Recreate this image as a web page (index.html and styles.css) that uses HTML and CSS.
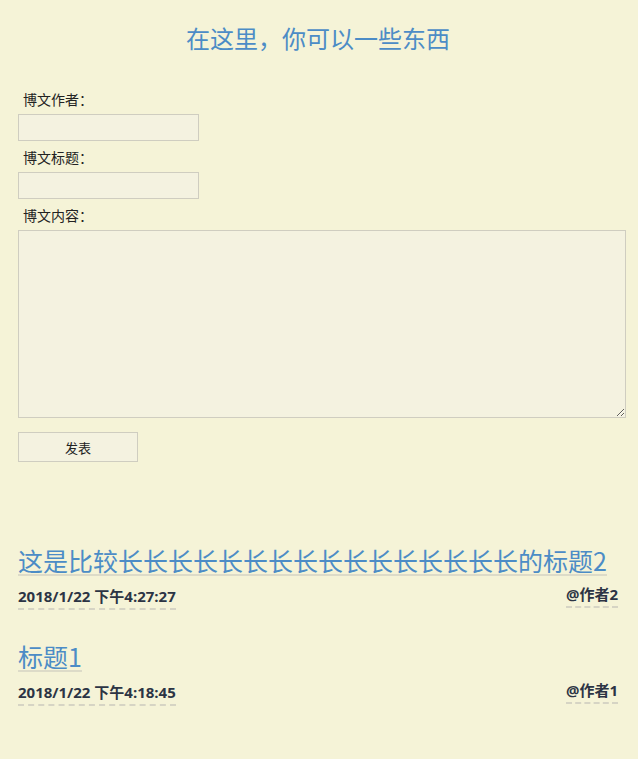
FILE: index.html
```html
<!DOCTYPE html>
<html lang="zh-CN">
<head>
<meta charset="utf-8">
<title>博客</title>
<link rel="stylesheet" href="styles.css">
</head>
<body>
<main class="page">
  <h1 class="heading">在这里，你可以一些东西</h1>
  <form class="editor">
    <label class="field-label">博文作者：</label>
    <input class="field-input" type="text">
    <label class="field-label">博文标题：</label>
    <input class="field-input" type="text">
    <label class="field-label">博文内容：</label>
    <textarea class="field-area"></textarea>
    <button class="submit" type="button">发表</button>
  </form>
  <section class="posts">
    <article class="post">
      <h2 class="post-title">这是比较长长长长长长长长长长长长长长长长的标题2</h2>
      <div class="post-meta">
        <span class="post-date">2018/1/22 下午4:27:27</span>
        <span class="post-author">@作者2</span>
      </div>
    </article>
    <article class="post">
      <h2 class="post-title">标题1</h2>
      <div class="post-meta">
        <span class="post-date">2018/1/22 下午4:18:45</span>
        <span class="post-author">@作者1</span>
      </div>
    </article>
  </section>
</main>
</body>
</html>
```
FILE: styles.css
```css
html, body {
  margin: 0;
  padding: 0;
  background: #f5f3d7;
}
body {
  font-family: "Open Sans", "Noto Sans CJK SC", sans-serif;
  color: #222;
}
.page {
  padding: 0 20px 0 18px;
}
.heading {
  margin: 0;
  padding-top: 23px;
  text-align: center;
  font-family: "Noto Sans CJK SC", sans-serif;
  font-weight: normal;
  font-size: 24px;
  line-height: 30px;
  color: #4c8cc6;
}
.editor {
  display: flex;
  flex-direction: column;
  align-items: flex-start;
  margin-top: 36px;
}
.field-label {
  font-family: "Noto Sans CJK SC", sans-serif;
  font-size: 14px;
  line-height: 20px;
  padding-left: 5px;
  margin: 6px 0 5px;
  color: #222;
}
.field-label:first-child {
  margin-top: 0;
}
.field-input {
  box-sizing: border-box;
  width: 181px;
  height: 27px;
  margin: 0;
  border: 1px solid #cfcdc0;
  background: #f4f2e0;
  outline: none;
}
.field-area {
  box-sizing: border-box;
  width: 608px;
  height: 188px;
  margin: 0;
  border: 1px solid #cfcdc0;
  background: #f4f2e0;
  outline: none;
  display: block;
}
.submit {
  box-sizing: border-box;
  width: 120px;
  height: 30px;
  margin-top: 14px;
  border: 1px solid #cfcdc0;
  background: #f4f2e0;
  font-family: "Noto Sans CJK SC", sans-serif;
  font-size: 13px;
  color: #222;
  padding: 0;
}
.posts {
  margin-top: 84px;
  display: flex;
  flex-direction: column;
  gap: 32px;
}
.post-title {
  display: inline-block;
  margin: 0;
  font-family: "Noto Sans CJK SC", sans-serif;
  font-weight: normal;
  font-size: 25px;
  line-height: 28px;
  color: #4c8cc6;
  border-bottom: 2px solid #dddbc8;
}
.post {
  display: flex;
  flex-direction: column;
  align-items: flex-start;
}
.post-meta {
  align-self: stretch;
  display: flex;
  justify-content: space-between;
  align-items: flex-start;
  margin-top: 10px;
}
.post-date,
.post-author {
  font-size: 15px;
  font-weight: bold;
  line-height: 20px;
  color: #2c3444;
  padding-bottom: 2px;
  border-bottom: 2px dashed #d6d4c4;
}
.post-author {
  margin-top: -2px;
}
```
